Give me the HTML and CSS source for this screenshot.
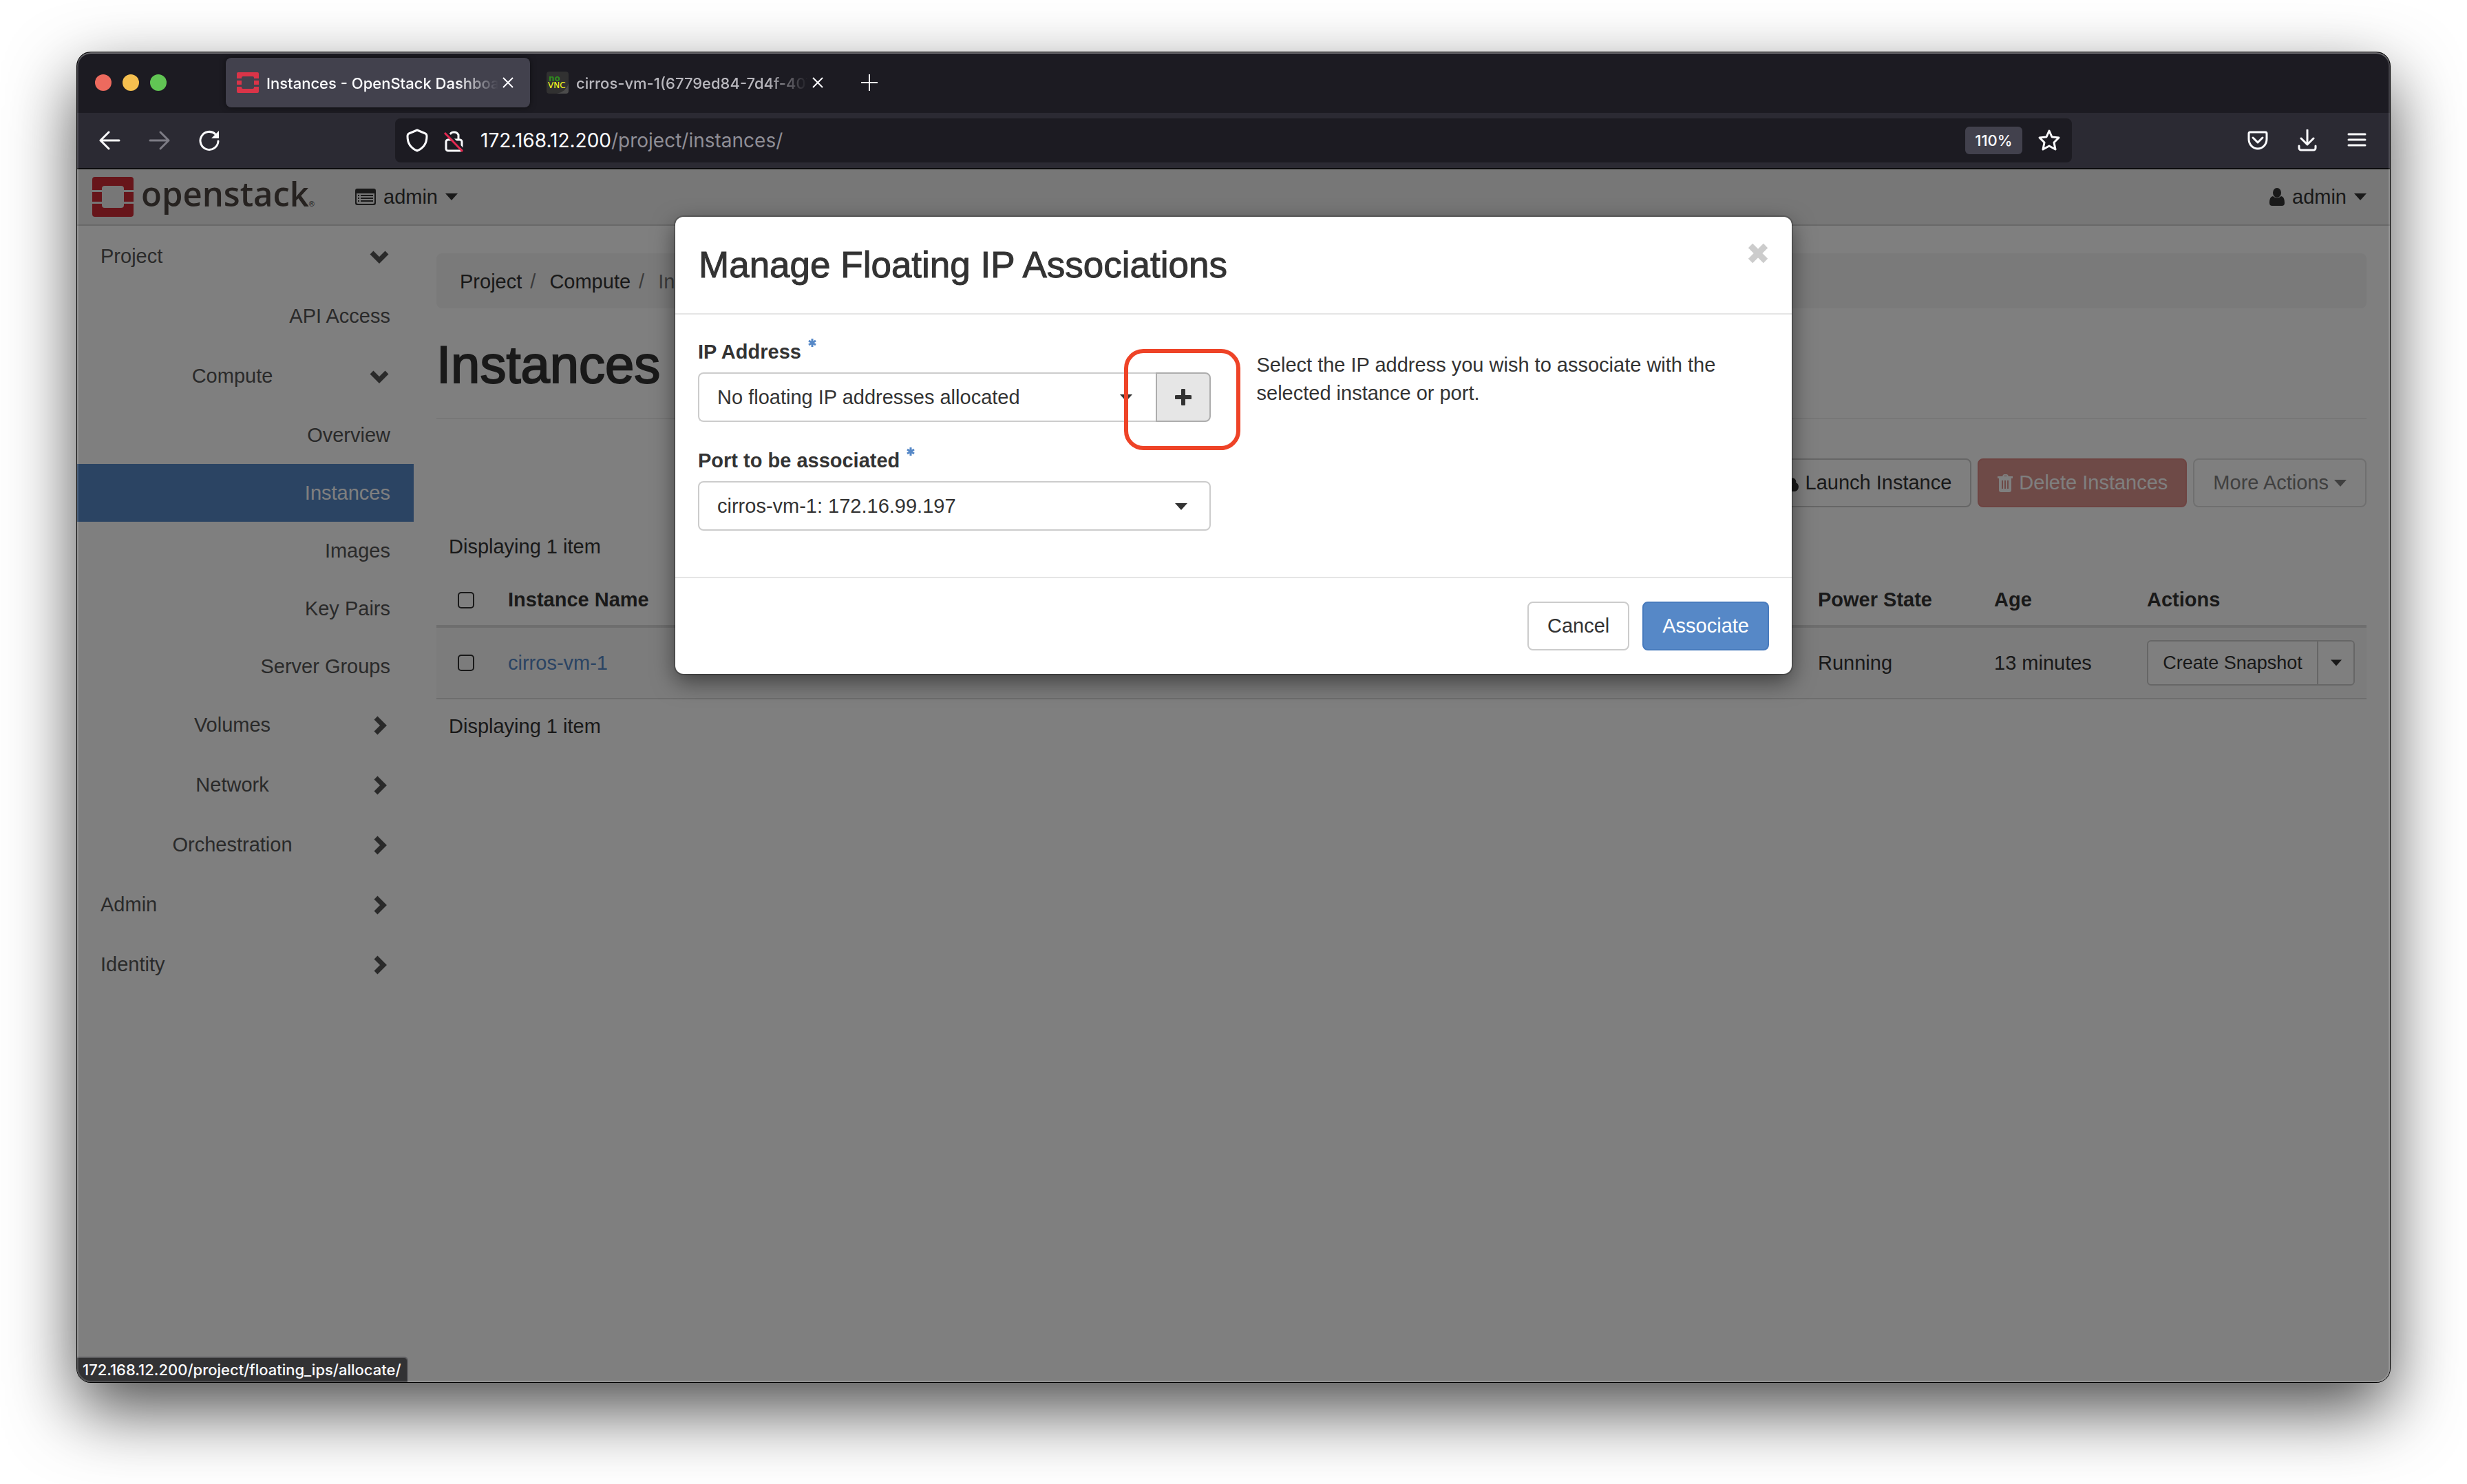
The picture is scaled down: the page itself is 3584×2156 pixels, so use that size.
FILE: index.html
```html
<!DOCTYPE html>
<html lang="en">
<head>
<meta charset="utf-8">
<title>Instances - OpenStack Dashboard</title>
<link rel="stylesheet" href="styles.css">
</head>
<body>
<div class="window">
  <div class="tabbar">
    <div class="lights"><span class="light red"></span><span class="light yellow"></span><span class="light green"></span></div>
    <div class="tab active">
      <svg class="favicon" viewBox="0 0 32 32"><path fill="#da3448" d="M2 1h28a2 2 0 0 1 2 2v7h-7V9a2 2 0 0 0-2-2H9a2 2 0 0 0-2 2v1H0V3a2 2 0 0 1 2-2zM0 13h7v6H0zM25 13h7v6h-7zM0 22h7v1a2 2 0 0 0 2 2h14a2 2 0 0 0 2-2v-1h7v7a2 2 0 0 1-2 2H2a2 2 0 0 1-2-2z"/></svg>
      <span class="tab-title">Instances - OpenStack Dashboard</span>
      <button class="tab-close" aria-label="Close tab"><svg width="16" height="16" viewBox="0 0 16 16"><path d="M1 1l14 14M15 1L1 15" stroke="#fbfbfe" stroke-width="2" fill="none"/></svg></button>
    </div>
    <div class="tab">
      <svg class="favicon" viewBox="0 0 32 32"><rect width="32" height="32" rx="4" fill="#313131"/><path d="M32 17v11a4 4 0 0 1-4 4H15q14-3 17-15z" fill="#4c4c4c"/><text x="3" y="14" font-size="12" font-weight="700" fill="#2f8a1e">no</text><text x="2" y="24" font-size="12" fill="#ffff1f">VNC</text></svg>
      <span class="tab-title">cirros-vm-1(6779ed84-7d4f-407b)</span>
      <button class="tab-close" aria-label="Close tab"><svg width="16" height="16" viewBox="0 0 16 16"><path d="M1 1l14 14M15 1L1 15" stroke="#fbfbfe" stroke-width="2" fill="none"/></svg></button>
    </div>
    <button class="new-tab" aria-label="New tab"><svg width="24" height="24" viewBox="0 0 24 24"><path d="M12 0v24M0 12h24" stroke="#fbfbfe" stroke-width="2" fill="none"/></svg></button>
  </div>

  <div class="toolbar">
    <div class="nav-buttons">
      <button aria-label="Back"><svg width="32" height="32" viewBox="0 0 32 32"><path d="M29 16H2M14 4L2 16l12 12" fill="none" stroke="#fbfbfe" stroke-width="3" stroke-linecap="round" stroke-linejoin="round"/></svg></button>
      <button aria-label="Forward" disabled><svg width="32" height="32" viewBox="0 0 32 32"><path d="M2 16h27M17 4l12 12-12 12" fill="none" stroke="#7d7c85" stroke-width="3" stroke-linecap="round" stroke-linejoin="round"/></svg></button>
      <button aria-label="Reload"><svg width="32" height="32" viewBox="0 0 32 32"><path d="M29 17a13 13 0 1 1-4-10" fill="none" stroke="#fbfbfe" stroke-width="3" stroke-linecap="round"/><path d="M30 2v11H19z" fill="#fbfbfe"/></svg></button>
    </div>
    <div class="urlbar">
      <svg width="32" height="34" viewBox="0 0 32 34"><path d="M16 2l12 5c2 1 2 2 2 4 0 10-4 17-14 21C6 28 2 21 2 11c0-2 0-3 2-4z" fill="none" stroke="#fbfbfe" stroke-width="3" stroke-linejoin="round"/></svg>
      <svg width="32" height="34" viewBox="0 0 32 34"><rect x="4" y="16" width="23" height="16" rx="3" fill="none" stroke="#fbfbfe" stroke-width="3"/><path d="M9 10a7 7 0 0 1 13-1v7" fill="none" stroke="#fbfbfe" stroke-width="3"/><path d="M4 4l26 27" stroke="#1c1b22" stroke-width="3" fill="none"/><path d="M2 6l26 27" stroke="#e22850" stroke-width="3" fill="none"/></svg>
      <span class="url"><span class="host">172.168.12.200</span>/project/instances/</span>
      <span class="zoom">110%</span>
      <svg width="34" height="34" viewBox="0 0 34 34"><path d="M17 3l4 9 10 1-7 7 2 10-9-5-9 5 2-10-7-7 10-1z" fill="none" stroke="#fbfbfe" stroke-width="3" stroke-linejoin="round"/></svg>
    </div>
    <div class="tools">
      <svg width="32" height="32" viewBox="0 0 32 32"><path d="M5 4h22a2 2 0 0 1 2 2v8c0 8-6 14-13 14S3 22 3 14V6a2 2 0 0 1 2-2z" fill="none" stroke="#fbfbfe" stroke-width="3"/><path d="M9 12l7 7 7-7" fill="none" stroke="#fbfbfe" stroke-width="3" stroke-linecap="round" stroke-linejoin="round"/></svg>
      <svg width="32" height="32" viewBox="0 0 32 32"><path d="M16 1v20M7 13l9 9 9-9M4 24v3a3 3 0 0 0 3 3h18a3 3 0 0 0 3-3v-3" fill="none" stroke="#fbfbfe" stroke-width="3" stroke-linecap="round" stroke-linejoin="round"/></svg>
      <svg width="32" height="32" viewBox="0 0 32 32"><path d="M4 7h24M4 15h24M4 23h24" fill="none" stroke="#fbfbfe" stroke-width="3" stroke-linecap="round"/></svg>
    </div>
  </div>

  <div class="viewport">
    <header class="topbar">
      <a class="brand" href="#">
        <svg width="60" height="60" viewBox="0 0 60 60"><path fill="#cf2a35" d="M4 1h52a4 4 0 0 1 4 4v15H46v-2a4 4 0 0 0-4-4H18a4 4 0 0 0-4 4v2H0V5a4 4 0 0 1 4-4zM0 23h14v14H0zM46 23h14v14H46zM0 40h14v2a4 4 0 0 0 4 4h24a4 4 0 0 0 4-4v-2h14v15a4 4 0 0 1-4 4H4a4 4 0 0 1-4-4z"/></svg>
        <span class="brand-name">openstack</span><span class="reg">®</span>
      </a>
      <a class="menu" href="#">
        <svg width="30" height="24" viewBox="0 0 30 24"><path fill="#333" fill-rule="evenodd" d="M3 0h24a3 3 0 0 1 3 3v18a3 3 0 0 1-3 3H3a3 3 0 0 1-3-3V3a3 3 0 0 1 3-3zM2 7v13a2 2 0 0 0 2 2h22a2 2 0 0 0 2-2V7zM4 9h2v2H4zM8 9h18v2H8zM4 13h2v2H4zM8 13h18v2H8zM4 17h2v2H4zM8 17h18v2H8z"/></svg>
        <span>admin</span><svg class="caret" viewBox="0 0 18 10"><path d="M0 0h18l-9 10z"/></svg>
      </a>
      <a class="menu user" href="#">
        <svg width="22" height="26" viewBox="0 0 22 26"><ellipse cx="11" cy="7" rx="6" ry="7" fill="#333"/><path d="M5 12q6 5 12 0c4 1 5 5 5 10q0 4-4 4H4q-4 0-4-4c0-5 1-9 5-10z" fill="#333"/></svg>
        <span>admin</span><svg class="caret" viewBox="0 0 18 10"><path d="M0 0h18l-9 10z"/></svg>
      </a>
    </header>

    <div class="content">
      <nav class="sidebar">
        <a class="group" href="#">Project<svg class="chev" viewBox="0 0 28 28"><path d="M3 8l11 11L25 8"/></svg></a>
        <a class="leaf tall" href="#">API Access</a>
        <a class="group sub" href="#"><span>Compute</span><svg class="chev" viewBox="0 0 28 28"><path d="M3 8l11 11L25 8"/></svg></a>
        <a class="leaf" href="#">Overview</a>
        <a class="leaf current" href="#">Instances</a>
        <a class="leaf" href="#">Images</a>
        <a class="leaf" href="#">Key Pairs</a>
        <a class="leaf" href="#">Server Groups</a>
        <a class="group sub" href="#"><span>Volumes</span><svg class="chev" viewBox="0 0 28 28"><path d="M9 3l11 11L9 25"/></svg></a>
        <a class="group sub" href="#"><span>Network</span><svg class="chev" viewBox="0 0 28 28"><path d="M9 3l11 11L9 25"/></svg></a>
        <a class="group sub" href="#"><span>Orchestration</span><svg class="chev" viewBox="0 0 28 28"><path d="M9 3l11 11L9 25"/></svg></a>
        <a class="group" href="#">Admin<svg class="chev" viewBox="0 0 28 28"><path d="M9 3l11 11L9 25"/></svg></a>
        <a class="group" href="#">Identity<svg class="chev" viewBox="0 0 28 28"><path d="M9 3l11 11L9 25"/></svg></a>
      </nav>

      <main class="main">
        <ol class="breadcrumb"><li><a href="#">Project</a></li><li><a href="#">Compute</a></li><li>Instances</li></ol>
        <h1>Instances</h1>
        <div class="actions">
          <button class="btn"><svg width="34" height="26" viewBox="0 0 34 26"><path fill="#333" fill-rule="evenodd" d="M8 25a8 8 0 0 1-3-15A9 9 0 0 1 21 6a5 5 0 0 1 7 6 7 7 0 0 1-1 13zM16 9l-7 7h4v6h6v-6h4z"/></svg>Launch Instance</button>
          <button class="btn danger" disabled><svg width="24" height="26" viewBox="0 0 24 26"><path fill="#fff" fill-rule="evenodd" d="M8 3l1-2q1-1 2-1h3q1 0 2 1l1 2h6v3h-2v17q0 3-3 3H6q-3 0-3-3V6H1V3zM10 3h5l-1-1h-3zM7 9v12h2V9zM11 9v12h2V9zM15 9v12h2V9z"/></svg>Delete Instances</button>
          <button class="btn muted" disabled>More Actions<svg class="caret" viewBox="0 0 18 10"><path d="M0 0h18l-9 10z"/></svg></button>
        </div>
        <p class="count">Displaying 1 item</p>
        <table>
          <colgroup><col class="c-check"><col><col class="c-power"><col class="c-age"><col class="c-actions"></colgroup>
          <thead><tr><th class="check"><input type="checkbox" aria-label="Select all"></th><th>Instance Name</th><th>Power State</th><th>Age</th><th>Actions</th></tr></thead>
          <tbody><tr><td class="check"><input type="checkbox" aria-label="Select cirros-vm-1"></td><td><a href="#">cirros-vm-1</a></td><td>Running</td><td>13 minutes</td>
            <td><div class="split"><button>Create Snapshot</button><button class="drop" aria-label="More actions"><svg class="caret small" viewBox="0 0 18 10"><path d="M0 0h18l-9 10z"/></svg></button></div></td></tr></tbody>
        </table>
        <p class="count">Displaying 1 item</p>
      </main>
    </div>

    <div class="backdrop">
      <form class="modal" role="dialog" aria-labelledby="modal-title">
        <div class="modal-header">
          <h2 id="modal-title">Manage Floating IP Associations</h2>
          <button class="close" type="button" aria-label="Close"><svg width="30" height="30" viewBox="0 0 30 30"><path d="M4 4l22 22M26 4L4 26" stroke="#ccc" stroke-width="9" fill="none"/></svg></button>
        </div>
        <div class="modal-body">
          <div>
            <label for="ip">IP Address<svg class="star" viewBox="0 0 14 14"><path d="M7 1v12M2 4l10 6M12 4L2 10"/></svg></label>
            <div class="input-group">
              <div class="select"><select id="ip"><option>No floating IP addresses allocated</option></select><svg class="caret" viewBox="0 0 18 10"><path d="M0 0h18l-9 10z"/></svg></div>
              <div class="add-wrap"><button class="add" type="button" aria-label="Allocate floating IP"><svg width="24" height="24" viewBox="0 0 24 24"><path d="M12 2v20M2 12h20" stroke="#333" stroke-width="6" stroke-linecap="round"/></svg></button><span class="highlight"></span></div>
            </div>
            <label for="port">Port to be associated<svg class="star" viewBox="0 0 14 14"><path d="M7 1v12M2 4l10 6M12 4L2 10"/></svg></label>
            <div class="select whole"><select id="port"><option>cirros-vm-1: 172.16.99.197</option></select><svg class="caret" viewBox="0 0 18 10"><path d="M0 0h18l-9 10z"/></svg></div>
          </div>
          <p class="help">Select the IP address you wish to associate with the selected instance or port.</p>
        </div>
        <div class="modal-footer"><button class="btn" type="button">Cancel</button><button class="btn primary" type="submit">Associate</button></div>
      </form>
    </div>
    <div class="status">172.168.12.200/project/floating_ips/allocate/</div>
  </div>
</div>
</body>
</html>
```
FILE: styles.css
```css
* { box-sizing: border-box; }

body {
  margin: 0;
  min-height: 100vh;
  padding: 76px 112px 148px;
  display: flex;
  background: #fff;
  color: #333;
  font: 29px/41px "Liberation Sans", Arial, sans-serif;
}

a { color: inherit; text-decoration: none; }
svg { flex: none; display: block; }
button { font: inherit; color: inherit; cursor: pointer; }
p, h1, h2, ol { margin: 0; padding: 0; }

.window {
  position: relative;
  flex: 1;
  display: flex;
  flex-direction: column;
  overflow: hidden;
  border-radius: 20px;
  background: #1c1b22;
  box-shadow: 0 0 0 1px #000, 0 40px 100px rgba(0, 0, 0, 0.7);
}
.window::after {
  content: "";
  position: absolute;
  inset: 0;
  border-radius: 20px;
  box-shadow: inset 0 0 0 2px rgba(255, 255, 255, 0.15), inset 0 2px 0 rgba(255, 255, 255, 0.25);
  pointer-events: none;
}

/* Browser chrome */
.tabbar, .toolbar { font-family: Inter, sans-serif; display: flex; align-items: center; flex: none; }
.tabbar { height: 88px; padding-left: 26px; }
.lights { display: flex; gap: 16px; width: 190px; }
.light { width: 24px; height: 24px; border-radius: 50%; }
.red { background: #ed6a5e; }
.yellow { background: #f5bf4f; }
.green { background: #61c554; }
.tab {
  display: flex;
  align-items: center;
  width: 442px;
  height: 72px;
  padding: 0 16px;
  border-radius: 8px;
  color: #b9b8be;
  font-size: 22px;
  font-weight: 500;
}
.tab.active { background: #42414d; color: #fbfbfe; box-shadow: 0 0 8px rgba(0, 0, 0, 0.5); }
.tab + .tab { margin-left: 8px; }
.favicon { width: 32px; height: 32px; margin-right: 11px; font-family: "DejaVu Sans", sans-serif; }
.tab-title {
  flex: 1;
  overflow: hidden;
  padding-top: 3px;
  white-space: nowrap;
  mask-image: linear-gradient(to left, transparent, #000 60px);
}
.tab-close, .new-tab, .nav-buttons button { padding: 0; border: 0; background: none; }
.tab-close { margin: 0 8px 0 6px; }
.new-tab { margin-left: 31px; }

.toolbar { height: 82px; background: #2b2a33; border-bottom: 2px solid #0c0c0d; }
.nav-buttons { display: flex; gap: 40px; width: 462px; padding-left: 32px; }
.urlbar {
  flex: 1;
  display: flex;
  align-items: center;
  gap: 22px;
  height: 64px;
  padding: 0 16px;
  border-radius: 8px;
  background: #1c1b22;
}
.url { flex: 1; color: #8f8e96; font-size: 28px; }
.host { color: #fbfbfe; }
.zoom {
  width: 83px;
  border-radius: 6px;
  background: #42414d;
  color: #fbfbfe;
  font-size: 22px;
  line-height: 40px;
  font-weight: 500;
  text-align: center;
}
.tools { display: flex; justify-content: flex-end; gap: 40px; width: 462px; padding-right: 32px; }

/* Dashboard */
.viewport { position: relative; flex: 1; background: #fff; }
.topbar {
  display: flex;
  align-items: center;
  height: 82px;
  padding: 0 34px 0 22px;
  background: #eee;
  border-bottom: 2px solid #d0d0d0;
}
.brand { display: flex; align-items: center; width: 382px; }
.brand-name { margin-left: 11px; font: 600 49px/60px "Open Sans", sans-serif; color: #4c4540; padding-bottom: 10px; }
.reg { font-size: 11px; padding-top: 20px; }
.menu { display: flex; align-items: center; gap: 11px; }
.user { margin-left: auto; }
.caret { width: 18px; height: 10px; fill: currentColor; }
.caret.small { width: 16px; }

.content { display: flex; }
.sidebar { width: 489px; padding-top: 1px; color: #555; }
.group, .leaf { display: flex; align-items: center; padding: 0 34px; }
.group { justify-content: space-between; height: 87px; padding-right: 36px; }
.sub { padding-left: 26px; }
.sub span { flex: 1; text-align: center; }
.leaf { justify-content: flex-end; height: 84px; }
.leaf.tall { height: 87px; }
.current { background: #5688c7; color: #fff; }
.chev { width: 28px; height: 28px; fill: none; stroke: #555; stroke-width: 7px; }

.main { flex: 1; padding: 40px 34px 0 33px; }
.breadcrumb {
  display: flex;
  padding: 21px 34px 18px;
  min-height: 80px;
  border-radius: 8px;
  background: #f5f5f5;
  list-style: none;
}
.breadcrumb li + li::before { content: "/\00a0"; padding: 0 12px; color: #777; }
.breadcrumb li:last-child { color: #777; }
h1 {
  margin-top: 40px;
  padding-bottom: 35px;
  border-bottom: 2px solid #eee;
  font-size: 76px;
  line-height: 84px;
  font-weight: 400;
  -webkit-text-stroke: 2px currentColor;
}
.actions { display: flex; justify-content: flex-end; gap: 9px; margin-top: 57px; }
.btn {
  display: flex;
  align-items: center;
  gap: 8px;
  height: 71px;
  padding: 0 27px;
  border: 2px solid #ccc;
  border-radius: 8px;
  background: #fff;
}
.danger { background: #dc948e; border-color: #dc8884; color: #fff; padding: 0 26px; }
.muted { border-color: #dfdfdf; color: #808080; }
.count { margin: 37px 18px 20px; }

table { width: 100%; border-collapse: collapse; table-layout: fixed; }
.c-check { width: 86px; }
.c-power { width: 256px; }
.c-age { width: 222px; }
.c-actions { width: 337px; }
th { padding: 16px 18px; text-align: left; border-bottom: 4px solid #ddd; }
td { padding: 18px; border-bottom: 2px solid #ddd; background: #f9f9f9; }
td a { color: #5688c7; }
.check { text-align: center; padding-left: 0; padding-right: 0; }
.check input {
  appearance: none;
  display: block;
  width: 24px;
  height: 24px;
  margin: 0 auto;
  border: 2px solid #333;
  border-radius: 5px;
}
table + .count { margin-top: 19px; }
.split { display: flex; width: 302px; height: 66px; border: 2px solid #ccc; border-radius: 6px; background: #fff; }
.split button { flex: 1; padding: 0; border: 0; background: none; font-size: 27px; white-space: nowrap; }
.split .drop { flex: none; width: 53px; border-left: 2px solid #ccc; }
.drop svg { margin: auto; }

/* Modal */
.backdrop {
  position: absolute;
  inset: 0;
  padding-top: 69px;
  background: rgba(0, 0, 0, 0.5);
}
.modal {
  width: 1622px;
  margin: 0 auto;
  border-radius: 12px;
  background: #fff;
  box-shadow: 0 0 0 2px rgba(0, 0, 0, 0.2), 0 11px 33px rgba(0, 0, 0, 0.5);
}
.modal-header {
  display: flex;
  justify-content: space-between;
  padding: 33px 34px;
  border-bottom: 2px solid #e5e5e5;
}
h2 { font-size: 53px; line-height: 74px; font-weight: 400; -webkit-text-stroke: 1px currentColor; }
.close { align-self: flex-start; padding: 5px 0; border: 0; background: none; }
.modal-body { display: grid; grid-template-columns: 1fr 1fr; gap: 67px; padding: 34px 33px 67px; }
label { display: flex; font-weight: 700; margin-bottom: 9px; }
.star { width: 14px; height: 14px; margin-left: 9px; fill: none; stroke: #5688c7; stroke-width: 3px; }
.input-group { display: flex; margin-bottom: 36px; }
.select { position: relative; flex: 1; }
select {
  display: block;
  appearance: none;
  width: 100%;
  height: 72px;
  padding: 0 26px;
  border: 2px solid #ccc;
  border-radius: 8px;
  background: #fff;
  color: inherit;
  font: inherit;
}
.input-group select { border-right: 0; border-radius: 8px 0 0 8px; }
.select .caret { position: absolute; right: 34px; top: 32px; }
.add-wrap { position: relative; display: flex; }
.add {
  display: grid;
  place-items: center;
  width: 80px;
  padding: 0;
  border: 2px solid #adadad;
  border-radius: 0 8px 8px 0;
  background: #e6e6e6;
}
.highlight {
  position: absolute;
  inset: -34px -43px -41px -46px;
  border: 6px solid #ee4327;
  border-radius: 28px;
  pointer-events: none;
}
.help { padding-top: 19px; }
.modal-footer {
  display: flex;
  justify-content: flex-end;
  gap: 19px;
  padding: 34px 33px;
  border-top: 2px solid #e5e5e5;
}
.primary { background: #5688c7; border-color: #487bbd; color: #fff; }

.status {
  position: absolute;
  left: 0;
  bottom: 0;
  padding: 0 8px;
  border: solid #5c5c5f;
  border-width: 2px 2px 0 0;
  border-radius: 0 6px 0 0;
  background: #323234;
  color: #fbfbfe;
  font: 500 22px/35px Inter, sans-serif;
}
```
